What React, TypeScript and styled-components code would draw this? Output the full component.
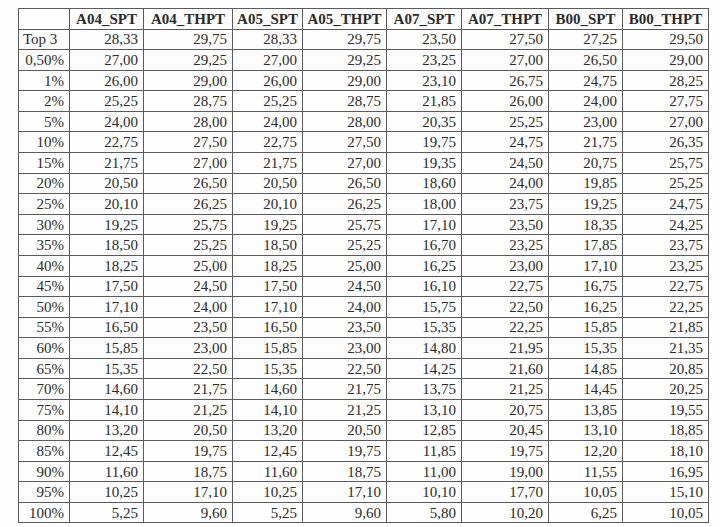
import styled, { createGlobalStyle } from 'styled-components';

const GlobalStyle = createGlobalStyle`
  html, body {
    margin: 0;
    padding: 0;
    background: #fdfdfd;
  }
`;

const Page = styled.div`
  padding: 8px 0 0 18px;
  font-family: 'Liberation Serif', 'Times New Roman', serif;
  color: #2b2b2b;
`;

const Table = styled.table`
  border-collapse: collapse;
  table-layout: fixed;
  width: 690px;
  font-size: 15px;
`;

const Row = styled.tr`
  height: 20.58px;
`;

const HeadCell = styled.th`
  border: 1px solid #5a5a5a;
  padding: 0 4px;
  font-weight: bold;
  text-align: center;
  white-space: nowrap;
  line-height: 18px;
`;

const Cell = styled.td<{ $left?: boolean }>`
  border: 1px solid #5a5a5a;
  padding: 0 5px 0 4px;
  text-align: ${(p) => (p.$left ? 'left' : 'right')};
  white-space: nowrap;
  line-height: 18px;
`;

const widths = [51, 74, 89, 70, 84, 75, 87, 74, 86];
const headers = ['', 'A04_SPT', 'A04_THPT', 'A05_SPT', 'A05_THPT', 'A07_SPT', 'A07_THPT', 'B00_SPT', 'B00_THPT'];

const rows: string[][] = [
  ['Top 3', '28,33', '29,75', '28,33', '29,75', '23,50', '27,50', '27,25', '29,50'],
  ['0,50%', '27,00', '29,25', '27,00', '29,25', '23,25', '27,00', '26,50', '29,00'],
  ['1%', '26,00', '29,00', '26,00', '29,00', '23,10', '26,75', '24,75', '28,25'],
  ['2%', '25,25', '28,75', '25,25', '28,75', '21,85', '26,00', '24,00', '27,75'],
  ['5%', '24,00', '28,00', '24,00', '28,00', '20,35', '25,25', '23,00', '27,00'],
  ['10%', '22,75', '27,50', '22,75', '27,50', '19,75', '24,75', '21,75', '26,35'],
  ['15%', '21,75', '27,00', '21,75', '27,00', '19,35', '24,50', '20,75', '25,75'],
  ['20%', '20,50', '26,50', '20,50', '26,50', '18,60', '24,00', '19,85', '25,25'],
  ['25%', '20,10', '26,25', '20,10', '26,25', '18,00', '23,75', '19,25', '24,75'],
  ['30%', '19,25', '25,75', '19,25', '25,75', '17,10', '23,50', '18,35', '24,25'],
  ['35%', '18,50', '25,25', '18,50', '25,25', '16,70', '23,25', '17,85', '23,75'],
  ['40%', '18,25', '25,00', '18,25', '25,00', '16,25', '23,00', '17,10', '23,25'],
  ['45%', '17,50', '24,50', '17,50', '24,50', '16,10', '22,75', '16,75', '22,75'],
  ['50%', '17,10', '24,00', '17,10', '24,00', '15,75', '22,50', '16,25', '22,25'],
  ['55%', '16,50', '23,50', '16,50', '23,50', '15,35', '22,25', '15,85', '21,85'],
  ['60%', '15,85', '23,00', '15,85', '23,00', '14,80', '21,95', '15,35', '21,35'],
  ['65%', '15,35', '22,50', '15,35', '22,50', '14,25', '21,60', '14,85', '20,85'],
  ['70%', '14,60', '21,75', '14,60', '21,75', '13,75', '21,25', '14,45', '20,25'],
  ['75%', '14,10', '21,25', '14,10', '21,25', '13,10', '20,75', '13,85', '19,55'],
  ['80%', '13,20', '20,50', '13,20', '20,50', '12,85', '20,45', '13,10', '18,85'],
  ['85%', '12,45', '19,75', '12,45', '19,75', '11,85', '19,75', '12,20', '18,10'],
  ['90%', '11,60', '18,75', '11,60', '18,75', '11,00', '19,00', '11,55', '16,95'],
  ['95%', '10,25', '17,10', '10,25', '17,10', '10,10', '17,70', '10,05', '15,10'],
  ['100%', '5,25', '9,60', '5,25', '9,60', '5,80', '10,20', '6,25', '10,05'],
];

export default function App() {
  return (
    <Page>
      <GlobalStyle />
      <Table>
        <colgroup>
          {widths.map((w, i) => (
            <col key={i} style={{ width: w }} />
          ))}
        </colgroup>
        <thead>
          <Row>
            {headers.map((h, i) => (
              <HeadCell key={i}>{h}</HeadCell>
            ))}
          </Row>
        </thead>
        <tbody>
          {rows.map((r) => (
            <Row key={r[0]}>
              {r.map((v, i) => (
                <Cell key={i} $left={v === 'Top 3'}>
                  {v}
                </Cell>
              ))}
            </Row>
          ))}
        </tbody>
      </Table>
    </Page>
  );
}
